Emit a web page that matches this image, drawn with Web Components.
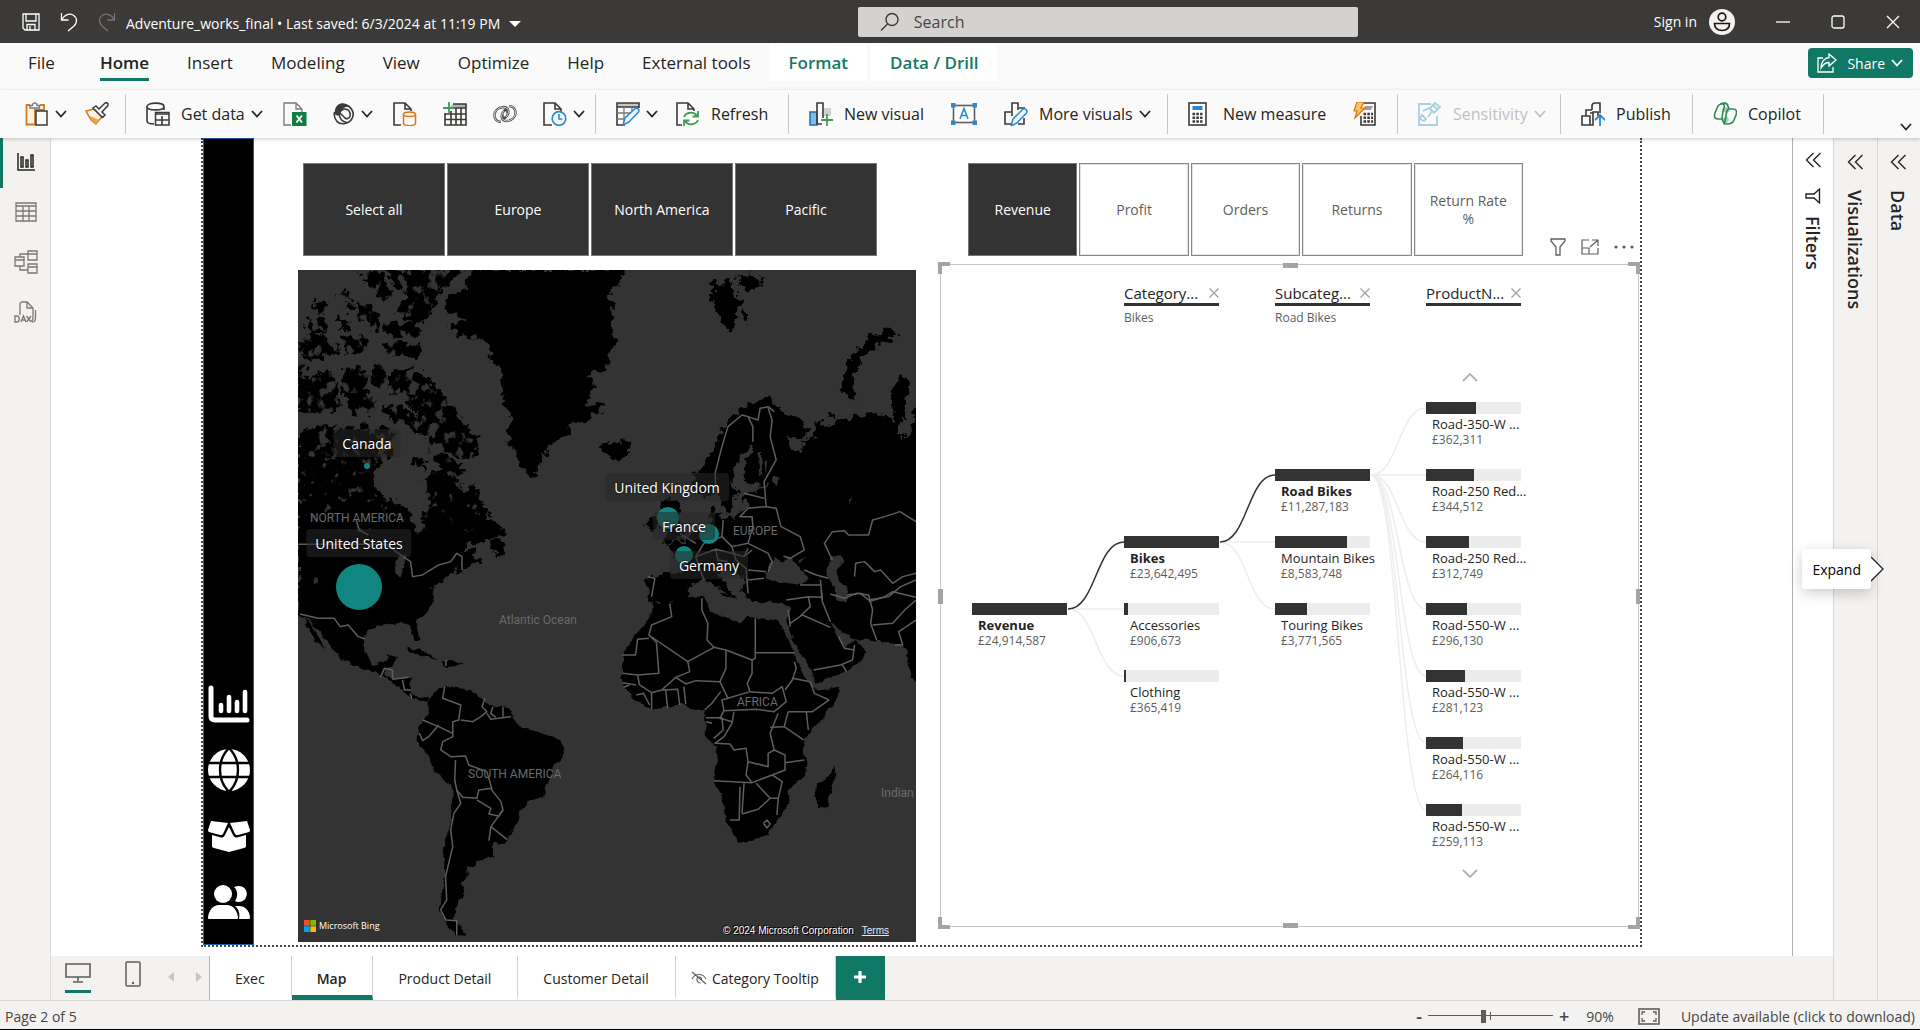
<!DOCTYPE html>
<html lang="en">
<head>
<meta charset="utf-8">
<title>Adventure_works_final</title>
<style>
html,body{margin:0;height:100%}
body{font-family:"Open Sans","Noto Sans",sans-serif;color:#252423;background:#fff;overflow:hidden}
pbi-app{height:100vh}
</style>
</head>
<body>
<pbi-app></pbi-app>
<script>
const RESET = `*{box-sizing:border-box}button{font:inherit;color:inherit;background:none;border:0;padding:0;margin:0;cursor:pointer}a{color:inherit;text-decoration:none}svg{display:block}`;
function define(name, css, html, init){
  customElements.define(name, class extends HTMLElement{
    constructor(){ super(); this.attachShadow({mode:"open"}); }
    connectedCallback(){
      if(this.ready) return; this.ready = true;
      const body = typeof html === "function" ? html(this) : html;
      this.shadowRoot.innerHTML = `<style>${RESET}${css}</style>${body}`;
      if(init) init(this, this.shadowRoot);
    }
  });
}

/* icon set: [viewBox width, viewBox height, markup] */
const D = 'fill="none" stroke="#3b3a39" stroke-width="1.6"';
const W = 'fill="none" stroke="#fff" stroke-width="1.3"';
const B = 'fill="none" stroke="#2b88d0" stroke-width="1.6"';
const G = 'fill="none" stroke="#3f9c57" stroke-width="1.8"';
const N = 'fill="none" stroke="#7a7876" stroke-width="1.3"';
const ICONS = {
  save:[18,18,`<path ${W} d="M1 1H17V17H3L1 15Z M4 1V8H14V1 M5 17V11.500H13V17 M8 13V17"/>`],
  undo:[18,20,`<path ${W} d="M1.500 1V8H8.500 M1.500 8C4 3 9 1 13 3C18 6 17 11 14 14L8 19"/>`],
  redo:[18,20,`<path fill="none" stroke="#777573" stroke-width="1.3" d="M16.500 1V8H9.500 M16.500 8C14 3 9 1 5 3C0 6 1 11 4 14L10 19"/>`],
  tri:[12,6,`<path fill="#fff" d="M0 0H12L6 6Z"/>`],
  search:[20,20,`<circle cx="12" cy="7.500" r="6" fill="none" stroke="#3b3a39" stroke-width="1.400"/><path d="M7.500 12L1 18.500" fill="none" stroke="#3b3a39" stroke-width="1.500"/>`],
  avatar:[26,26,`<circle cx="13" cy="13" r="13" fill="#f3f2f1"/><circle cx="13" cy="8" r="3.800" fill="none" stroke="#1b1a19" stroke-width="1.700"/><path d="M5.500 14.500H20.500C20.500 19 17.500 21.500 13 21.500S5.500 19 5.500 14.500Z" fill="none" stroke="#1b1a19" stroke-width="1.700"/>`],
  min:[14,14,`<path ${W} d="M0 7H14"/>`],
  max:[14,14,`<rect x="1" y="1" width="12" height="12" rx="2" ${W}/>`],
  close:[14,14,`<path ${W} d="M1 1L13 13M13 1L1 13"/>`],
  share:[20,20,`<path ${W} d="M6 5H1V19H16V14 M12 1L19 7L12 13V9.500C8 9.500 6 11.500 4 15C4 9 7.500 5 12 4.500Z"/>`],
  chev:[12,8,`<path fill="none" stroke="currentColor" stroke-width="1.800" d="M1 1L6 6.500L11 1"/>`],
  paste:[24,24,`<path fill="#fdf3e6" stroke="#d27a1d" stroke-width="1.800" d="M5 3H1.500V22.500H10V8H19V3H15"/><path fill="#fff" stroke="#7a7876" stroke-width="1.400" d="M5 6V3.500H7.500C7.500 0 12 0 12 3.500H14.500V6Z"/><rect x="11" y="9" width="11" height="14" fill="#fafafa" stroke="#3b3a39" stroke-width="1.500"/>`],
  brush:[24,24,`<path d="M1 9L9 7L17 15L14 18L11 22L6 18Z" fill="#fdf3e6" stroke="#d27a1d" stroke-width="1.500"/><path d="M5 14L14 18L11 22L6 18Z" fill="#f0a63c"/><path d="M8 6L11 4L14 7L20 1C22 0 24 2 22.500 4L17 10L20 13L17.500 15.500Z" fill="#fafafa" stroke="#3b3a39" stroke-width="1.500"/>`],
  getdata:[24,24,`<path ${D} d="M8 22C4 22 1 21 1 19V4 M18 8V4 M1 4.500C1 0 18 0 18 4.500S1 9 1 4.500"/><rect x="9.500" y="10.500" width="13.500" height="12.500" fill="#fafafa" stroke="#3b3a39" stroke-width="1.500"/><path ${D} d="M9 12H23 M9 18H23 M16 14V23" stroke-width="1.300"/>`],
  excel:[24,24,`<path ${N} d="M8 23H1V1H13L19 7V10 M13 1V7H19" stroke-width="1.600"/><rect x="9" y="10" width="14.500" height="14" fill="#107c41"/><path d="M13.500 13.500L19 20.500M19 13.500L13.500 20.500" stroke="#fff" stroke-width="1.800"/>`],
  lake:[22,24,`<path ${D} stroke-width="1.400" d="M1.500 10C0 18 6 23 12 21.500C19 20 22 13 19 8C17 4.500 13 2.500 9 3 M7 9C5 14 8 20 14 20.500 M8 9C11 5.500 16 7 17 11C18 15 15 18 12 16L7 11"/><path d="M2 8C3 3 8 0 13 2L17 5C13 4 9 6 8 10L5 14L1.500 12Z" fill="#3b3a39"/>`],
  sql:[24,24,`<path ${D} d="M8 23H1V1H12L18 7V9 M12 1V7H18"/><path d="M10.500 12V21C10.500 24.500 22.500 24.500 22.500 21V12" fill="#fafafa" stroke="#d27a1d" stroke-width="1.500"/><ellipse cx="16.500" cy="12.300" rx="6" ry="2.300" fill="#fcefdc" stroke="#d27a1d" stroke-width="1.500"/>`],
  table:[24,24,`<path d="M10 2H23V6H6Z" fill="#b3b0ad"/><path ${D} d="M10 2H23V23H2V11 M2 12H23 M2 17.500H23 M8 9V23 M13 6V23 M18 6V23 M9 6H23" stroke-width="1.300"/><path ${G} d="M6 0V12M0 6H12"/>`],
  verse:[24,24,`<g fill="none" stroke="#4a4846"><path stroke-width="2.400" d="M8 20C-1 20 -1 6 10 5C16 5 17 11 13 15C11 17 8 15 10 12 M16 4C25 4 25 18 14 19C8 19 7 13 11 9C13 7 16 9 14 12"/></g><path fill="none" stroke="#fafafa" stroke-width="0.800" d="M8 20C-1 20 -1 6 10 5C16 5 17 11 13 15 M16 4C25 4 25 18 14 19C8 19 7 13 11 9"/>`],
  recent:[24,24,`<path ${D} d="M9 23H1V1H12L18 7V9 M12 1V7H18"/><circle cx="16" cy="16.500" r="6.800" fill="#fafafa" stroke="#2b88d0" stroke-width="1.700"/><path ${B} d="M16 12V17H19.500"/>`],
  transform:[24,24,`<path d="M1 1H23V5H1Z" fill="#c8c6c4"/><path ${D} d="M9 23H1V1H23V6 M1 5H23" stroke-width="1.500"/><path ${N} d="M1 11H16M1 17H11M8 5V20M16 5V11"/><path d="M7 23L9 16L19 6.500C21 5.500 24 7.500 22.500 10L13 20Z" fill="#eaf4fb" stroke="#2b88d0" stroke-width="1.500"/>`],
  refresh:[24,24,`<path ${D} d="M6 23H1V1H12L18 7V9 M12 1V7H18"/><path ${G} d="M8 15C10 10 18 9 21 14 M22 9V14.500H16.500 M22 18C20 23 12 24 9 19 M8 24V18.500H13.500"/>`],
  visual:[24,24,`<path d="M15 6H22V14H15Z" fill="#d2d0ce"/><rect x="1" y="10" width="7" height="13" fill="#83b9e8" stroke="#1f6fb5" stroke-width="1.500"/><path ${D} d="M13 22H8V1H14V16"/><path ${G} d="M18 12V24M12 18H24"/>`],
  textbox:[26,22,`<rect x="2.500" y="2.500" width="21" height="17" fill="#fff" stroke="#605e5c" stroke-width="1.600"/><path fill="#2b88d0" d="M0 0H4.500V4.500H0ZM21.500 0H26V4.500H21.500ZM0 17.500H4.500V22H0ZM21.500 17.500H26V22H21.500Z"/><path ${B} d="M9 16L13 5.500L17 16M10.500 12.500H15.500" stroke-width="1.300"/>`],
  more:[24,24,`<path ${D} d="M7 22H1V10H7M8 14V1H14V8M20 16V22H14 M15 6H21" /><path d="M7 24L9 17L19 7C21 6 24 8 22.500 11L13 21Z" fill="#eaf4fb" stroke="#2b88d0" stroke-width="1.500"/>`],
  calc:[24,24,`<rect x="1" y="1" width="17" height="22" fill="#fff" stroke="#3b3a39" stroke-width="1.600"/><rect x="4.500" y="4" width="10" height="4" fill="#2b88d0"/><path stroke="#3b3a39" stroke-width="2.400" stroke-dasharray="2.600 1.200" d="M4.500 12H14.500M4.500 15.800H14.500M4.500 19.500H14.500"/>`],
  quick:[24,24,`<path ${D} d="M10 1H22V23H8V14"/><path d="M12 4H20L18 8H11Z" fill="#a19f9d"/><path stroke="#3b3a39" stroke-width="2.400" stroke-dasharray="2.600 1.200" d="M10.500 12H20M10.500 15.800H20M10.500 19.500H20"/><path d="M4 0H11L8 6H12L2 16L4 9H1Z" fill="#f8c36b" stroke="#d9730d" stroke-width="1.200"/>`],
  sens:[24,24,`<path fill="none" stroke="#a9cfe8" stroke-width="1.800" d="M13 2H1V23H19V14 M4 13L8 17L6 19L2 17Z M5 9L11 6L14 9L10 15 M12 6L17 1L22 5L16 11ZM15 3L20 8"/>`],
  publish:[24,24,`<path ${D} d="M5 12V8H11 M11 8V4C11 2 12 1 14 1H19V11 M1 14H9V23H1Z M9 11H12V23H9 M5 14V10 M12 17V10H17V14"/><path fill="none" stroke="#2b88d0" stroke-width="1.800" d="M19 24V13M14 18L19 13L24 18"/>`],
  copilot:[24,24,`<path d="M9 7L14 5L17 9L13 12Z M9 17L14 14L16 18L13 22Z" fill="#9bd0ae"/><path fill="none" stroke="#2f8a58" stroke-width="1.600" d="M7 2C10 1 14 0 15 4L16 7H20C24 7 24 10 23 13L21 18C20 21 18 22 14 22C11 22 10 20 9 17H5C1 17 1 14 2 11L4 6C5 3 6 2 9 2C13 2 11 6 10 9L9 17 M16 7C13.500 7 14 10 13 13L12 19C11 21 10 22 12 22"/>`],
  rchart:[18,18,`<path fill="none" stroke="#252423" stroke-width="1.500" d="M1 0V17H18 M4 4H6V14H4Z M9 7H11V14H9Z M14 2H16V14H14Z"/>`],
  rtable:[22,20,`<path ${N} d="M1 1H21V19H1Z M1 4H21 M1 9H21 M1 14H21 M8 4V19 M14 4V19"/>`],
  rmodel:[24,24,`<path ${N} d="M14 1H23V10H14Z M14 4H23 M1 7H10V16H1ZM1 10H10 M14 14H23V23H14ZM14 17H23 M6 7V4H14 M6 16V20H14"/>`],
  rdax:[24,22,`<path ${N} d="M6 14V3C6 2 7 1 8 1H13L19 7V16C19 19 18 20 17 20 M13 1V7H19 M21.500 9V17C21.500 20 20 21 18 21"/><path ${N} stroke-width="1.200" d="M1 15V21H3C6 21 6 15 3 15ZM7 21L9.500 15L12 21M8 19H11M12.500 15L17 21M17 15L12.500 21"/>`],
  nchart:[42,38,`<path fill="none" stroke="#fff" stroke-width="5" stroke-linecap="round" stroke-linejoin="round" d="M3 3V31C3 34 4 35 7 35H39"/><path stroke="#fff" stroke-width="4.600" stroke-linecap="round" d="M13 20V26M21 12V26M29 17V26M37 7V26"/>`],
  nglobe:[42,42,`<circle cx="21" cy="21" r="21" fill="#fff"/><path fill="none" stroke="#000" stroke-width="2.400" d="M0 14H42M0 28H42 M21 -1C9 11 9 31 21 43 M21 -1C33 11 33 31 21 43"/>`],
  nbox:[42,32,`<path fill="#fff" d="M3 1L20 3L15 14C14 15 13 15 12 15L1 12C0 11 0 11 0 10Z M39 1L22 3L27 14C28 15 29 15 30 15L41 12C42 11 42 11 42 10Z M4 15L13 17.500C15 17.500 16 17 17 15L21 7L25 15C26 17 27 17.500 29 17.500L38 15V26C38 27 37 28 36 28L21 32L6 28C5 28 4 27 4 26Z"/>`],
  nusers:[42,34,`<path fill="#fff" d="M30 1A8 8 0 1 1 27 16C30 12 30 5 26 2Z M31 34H41C42 34 42 33 42 32C41 25 37 21 31 21H27C31 24 32 29 31 34Z"/><circle cx="15" cy="9" r="9" fill="#fff"/><path fill="#fff" d="M11 20H19C25 20 29 25 30 32C30 33 30 34 29 34H1C0 34 0 33 0 32C1 25 5 20 11 20Z"/>`],
  funnel:[16,18,`<path fill="none" stroke="#605e5c" stroke-width="1.300" d="M1 1H15V3L10 9V17H6V9L1 3Z"/>`],
  sidefunnel:[16,16,`<path fill="none" stroke="#252423" stroke-width="1.400" d="M14.500 1V15L9 10H1V6H9Z"/>`],
  focus:[18,16,`<path fill="none" stroke="#605e5c" stroke-width="1.200" d="M8 1H1V15H17V9 M1 9H8V15 M9 8L17 1 M11 1H17V7"/>`],
  dots:[20,4,`<circle cx="2" cy="2" r="1.600" fill="#605e5c"/><circle cx="10" cy="2" r="1.600" fill="#605e5c"/><circle cx="18" cy="2" r="1.600" fill="#605e5c"/>`],
  x:[10,10,`<path fill="none" stroke="#a19f9d" stroke-width="1.300" d="M0.500 0.500L9.500 9.500M9.500 0.500L0.500 9.500"/>`],
  up:[16,9,`<path fill="none" stroke="#b3b0ad" stroke-width="1.800" d="M1 8L8 1L15 8"/>`],
  down:[16,9,`<path fill="none" stroke="#b3b0ad" stroke-width="1.800" d="M1 1L8 8L15 1"/>`],
  dbl:[16,16,`<path fill="none" stroke="#252423" stroke-width="1.400" d="M8.500 1L1.500 8L8.500 15M15.500 1L8.500 8L15.500 15"/>`],
  desktop:[26,20,`<path fill="none" stroke="#605e5c" stroke-width="1.600" d="M1 1H25V14H1Z M13 14V18M8 19H18"/>`],
  phone:[16,26,`<rect x="1" y="1" width="14" height="24" rx="1" fill="none" stroke="#605e5c" stroke-width="1.500"/><circle cx="8" cy="22" r="1.200" fill="#605e5c"/>`],
  left:[6,10,`<path fill="#c8c6c4" d="M6 0V10L0 5Z"/>`],
  right:[6,10,`<path fill="#c8c6c4" d="M0 0V10L6 5Z"/>`],
  hidden:[16,14,`<path fill="none" stroke="#605e5c" stroke-width="1.100" d="M1 8C4 2 12 2 15 8 M1 1L15 13 M9.500 12C5 12 5 6 8 6C10 6 11 8 10.500 9"/>`],
  plus:[12,12,`<path stroke="#fff" stroke-width="3.200" d="M6 0V12M0 6H12"/>`],
  fit:[22,17,`<rect x="1" y="1" width="20" height="15" fill="none" stroke="#605e5c" stroke-width="1.600"/><path fill="none" stroke="#605e5c" stroke-width="1.300" d="M7 4H4V7M15 4H18V7M7 13H4V10M15 13H18V10"/>`],
  bing:[12,12,`<path fill="#f25022" d="M0 0H5.700V5.700H0Z"/><path fill="#7fba00" d="M6.300 0H12V5.700H6.300Z"/><path fill="#00a4ef" d="M0 6.300H5.700V12H0Z"/><path fill="#ffb900" d="M6.300 6.300H12V12H6.300Z"/>`]
};
define("pbi-icon", `:host{display:block;flex:none}`, el => {
  const [w,h,m] = ICONS[el.getAttribute("name")];
  return `<svg width="${w}" height="${h}" viewBox="0 0 ${w} ${h}" aria-hidden="true">${m}</svg>`;
});
const icon = n => `<pbi-icon name="${n}"></pbi-icon>`;

define("pbi-title-bar", `
:host{display:grid;grid-template-columns:837fr 500px 543fr;align-items:center;height:43px;padding:0 20px 0 22px;background:#3b3a38;color:#fff;font-size:14px}
.left,.right{display:flex;align-items:center}
.left{gap:20px}.doc{display:flex;align-items:center;gap:9px;margin-left:-10px;padding-top:4px;white-space:nowrap}
.search{display:flex;align-items:center;gap:14px;height:30px;padding:0 22px;background:#d3d2d0;border-radius:2px}
input{flex:1;border:0;background:none;outline:0;font:16px "Open Sans",sans-serif;color:#3b3a39;padding:0}
input::placeholder{color:#484644;opacity:1}
.right{justify-content:flex-end;gap:41px}.who{display:flex;align-items:center;gap:12px}`,
`<div class="left"><button aria-label="Save">${icon("save")}</button><button aria-label="Undo">${icon("undo")}</button><button aria-label="Redo">${icon("redo")}</button>
<button class="doc"><span>Adventure_works_final • Last saved: 6/3/2024 at 11:19 PM</span>${icon("tri")}</button></div>
<label class="search">${icon("search")}<input type="text" placeholder="Search" aria-label="Search"></label>
<div class="right"><button class="who"><span>Sign in</span>${icon("avatar")}</button><button aria-label="Minimize">${icon("min")}</button><button aria-label="Maximize">${icon("max")}</button><button aria-label="Close">${icon("close")}</button></div>`);

define("pbi-menu-tabs", `
:host{display:flex;align-items:flex-start;height:47px;background:#fafafa;padding:0 7px 0 9px;font-size:17px}
nav{display:flex;flex:1}
a{display:block;height:38px;line-height:40px;padding:0 19px;white-space:nowrap}
a.file{margin-right:7px}
a.on{font-weight:600}a.on::after{content:"";display:block;height:3px;margin-top:-5px;background:#117865}
a.ctx{background:#fff;color:#117865;font-weight:600;margin-right:4px}
.share{display:flex;align-items:center;gap:10px;height:30px;margin-top:5px;padding:0 10px 0 9px;border-radius:4px;background:#117865;color:#fff;font-size:14px}
.share span{margin-right:-4px}`,
`<nav><a href="#" class="file">File</a><a href="#" class="on">Home</a><a href="#">Insert</a><a href="#">Modeling</a><a href="#">View</a><a href="#">Optimize</a><a href="#">Help</a><a href="#">External tools</a><a href="#" class="ctx">Format</a><a href="#" class="ctx">Data / Drill</a></nav>
<button class="share">${icon("share")}<span>Share</span>${icon("chev")}</button>`);

define("pbi-ribbon-item", `
:host{display:block}
:host(:not([menu])){margin-right:6px}
button{display:flex;align-items:center;height:40px;white-space:nowrap}
.text{padding-left:11px}
.chev{padding-left:6px}
:host([disabled]) button{color:#c2c0be}`,
el => `<button ${el.hasAttribute("disabled")?"disabled":""} aria-label="${el.getAttribute("label")}">${icon(el.getAttribute("icon"))}${el.textContent?`<span class="text"><slot></slot></span>`:""}${el.hasAttribute("menu")?`<span class="chev">${icon("chev")}</span>`:""}</button>`);

define("pbi-ribbon", `
:host{display:flex;align-items:center;height:48px;padding-left:25px;background:#fafafa;font-size:16px;box-shadow:0 1px 4px rgba(0,0,0,.22);position:relative;z-index:2}
.g{display:flex;align-items:center;gap:var(--gap,20px);height:40px;width:var(--w);border-right:1px solid #c8c6c4;margin-right:20px}
.collapse{margin:26px 8px 0 auto}`,
() => {
  const groups = [
    [101,18,[["paste","Paste","",1],["brush","Format painter"]]],
    [450,20,[["getdata","Get data","Get data",1],["excel","Excel workbook"],["lake","Data hub","",1],["sql","SQL Server"],["table","Enter data"],["verse","Dataverse"],["recent","Recent sources","",1]]],
    [173,18,[["transform","Transform data","",1],["refresh","Refresh","Refresh"]]],
    [359,21,[["visual","New visual","New visual"],["textbox","Text box"],["more","More visuals","More visuals",1]]],
    [210,21,[["calc","New measure","New measure"],["quick","Quick measure"]]],
    [143,0,[["sens","Sensitivity","Sensitivity",1,1]]],
    [112,0,[["publish","Publish","Publish"]]],
    [111,0,[["copilot","Copilot","Copilot"]]]];
  return groups.map(([w,gap,items]) => `<div class="g" style="--w:${w}px;--gap:${gap}px">${items.map(([ic,label,text,menu,dis]) =>
    `<pbi-ribbon-item icon="${ic}" label="${label}"${menu?" menu":""}${dis?" disabled":""}>${text||""}</pbi-ribbon-item>`).join("")}</div>`).join("")
    + `<button class="collapse" aria-label="Collapse ribbon">${icon("chev")}</button>`;
});

define("pbi-view-rail", `
:host{display:flex;flex-direction:column;background:#f3f2f1;border-right:1px solid #dddbd9}
button{display:flex;align-items:center;justify-content:center;height:50px;border-left:3px solid transparent;padding:0 2px 2px 0}
.on{border-color:#117865}`,
`<button class="on" aria-label="Report view">${icon("rchart")}</button><button aria-label="Table view">${icon("rtable")}</button><button aria-label="Model view">${icon("rmodel")}</button><button aria-label="DAX query view">${icon("rdax")}</button>`);

define("pbi-slicer", `
:host{display:flex;gap:2px;height:93px;font-size:14px;line-height:18px}
button{flex:1 1 0;min-width:0;border:1px solid #8a8886;outline:1px solid #e4e2e0;outline-offset:-2px;background:#fff;color:#605e5c;padding:0 12px}
button.on{background:#333;color:#fff;outline:0;border-color:#777}`,
el => el.getAttribute("options").split(",").map((o,i) => `<button class="${el.hasAttribute("all")||i===0?"on":""}">${o}</button>`).join(""));

/* bubble map: land outlines are kept in two coordinate frames, north and south */
const NORTH_LAND = [
"20,515 60,500 110,500 140,490 165,505 190,490 205,520 230,500 262,520 240,560 262,580 240,600 220,610 207,640 210,680 235,715 280,735 300,755 307,790 320,820 333,810 328,770 350,740 345,700 335,660 345,640 375,640 380,620 400,640 430,690 445,690 455,665 475,720 500,770 515,790 540,815 510,822 495,845 455,850 430,870 460,870 455,885 480,900 470,907 430,930 410,935 380,960 355,980 352,1030 20,1030",
"500,850 515,822 525,850 540,870 535,885 505,880",
"265,330 300,325 340,345 370,400 400,430 420,470 450,510 468,530 465,580 440,600 400,580 380,560 350,540 340,500 310,460 290,430 300,400 270,390 250,410 245,350",
"340,560 390,580 440,640 410,650 370,610 345,590","300,585 345,600 340,625 300,610",
"130,330 170,320 200,350 185,380 195,400 215,440 190,470 150,460 130,390","20,350 50,350 100,330 120,380 125,430 110,450 60,455 20,450","205,315 240,320 235,380 210,395","230,440 280,440 340,490 345,530 315,520 300,510 260,490",
"240,30 430,30 410,50 380,90 360,130 340,180 310,190 280,170 265,150 290,110 260,80 250,60","165,35 230,35 240,70 260,110 230,120 200,80","235,190 330,190 325,230 260,235 230,220","225,250 325,255 320,295 250,290",
"60,125 90,130 80,160 50,150","120,95 150,100 160,150 130,150","165,125 195,135 200,180 170,180","40,180 80,170 90,210 50,230","120,165 150,180 150,210 125,210","25,240 60,220 100,240 120,280 60,298 25,280","130,230 190,230 190,275 140,285","200,150 220,160 215,220 200,215","20,310 45,335 20,350",
"450,30 835,30 815,80 795,100 805,150 798,200 812,240 795,290 790,330 740,345 760,370 735,430 785,435 770,455 730,485 700,490 690,520 640,560 625,600 612,652 590,645 570,620 560,580 540,520 550,470 530,430 525,330 500,290 495,250 470,232 420,232 400,190 440,180 385,150 390,110 435,90 440,60",
"785,570 765,550 800,550 820,540 850,550 848,575 825,600 795,595","1050,60 1075,80 1095,50 1110,110 1130,120 1110,170 1095,215 1075,180 1050,130","1108,50 1140,40 1175,60 1160,92 1125,85","1125,150 1145,155 1140,185 1128,180",
"1500,203 1507,225 1470,250 1430,290 1410,330 1400,370 1415,418 1390,415 1370,380 1385,330 1400,280 1440,235",
"1005,690 1005,645 1040,590 1060,560 1070,520 1090,480 1120,450 1160,425 1190,412 1215,440 1230,455 1270,485 1290,510 1280,540 1230,530 1250,570 1275,570 1290,535 1310,535 1308,480 1335,505 1345,490 1380,480 1400,475 1445,455 1470,465 1500,480 1498,420 1505,365 1525,345 1540,370 1530,430 1528,480 1510,525 1530,535 1545,510 1558,440 1590,440 1590,1030 1150,1030 1120,980 1140,960 1100,930 1060,935 1090,985 1115,1010 1100,1020 1060,975 1030,960 1000,965 985,1030 895,1030 888,950 975,940 985,905 950,880 940,855 985,840 1010,812 1045,795 1045,745 1062,725 1062,765 1085,775 1120,765 1135,745 1128,705 1160,690 1200,675 1140,672 1128,640 1140,600 1155,560 1145,548 1125,590 1105,620 1098,670 1115,700 1100,735 1095,762 1080,755 1068,690 1035,715",
"925,728 948,700 965,740 975,790 992,825 960,845 922,848 945,820 925,800 945,780 925,760","885,795 903,768 918,788 905,815 885,812","1345,455 1357,460 1352,475 1342,468"];
const NORTH_WATER = ["1183,955 1190,920 1205,892 1225,905 1245,890 1255,910 1295,955 1270,975 1200,962","1335,945 1345,890 1372,882 1380,905 1360,930 1365,955 1390,990 1385,1025 1360,1018 1352,975","345,495 368,490 365,515 345,512","262,905 275,880 290,890 275,950 262,940","1200,650 1220,655 1212,672 1200,668","1390,715 1402,712 1390,735","60,955 66,950 68,970 62,972","1165,580 1172,575 1175,640 1168,650","1180,600 1188,600 1184,640","1265,900 1285,893 1268,910"];
const NORTH_BORDER = ["1060,690 1058,640 1075,560 1090,500 1125,465 1140,470 1165,480 1170,445 1190,440 1205,455","1140,470 1152,500 1152,545","1190,445 1200,480 1195,530 1210,600 1180,665 1185,740 1210,745 1222,800 1270,830 1280,870 1245,895 1228,888","1185,740 1140,745 1120,770 1150,770 1152,800 1140,850 1100,860 1075,830 1078,780","1130,700 1180,715","1075,830 1030,850 1010,890 1030,960","1010,850 970,820","1140,850 1190,880 1200,905 1190,935","1010,890 1060,868 1100,880 1130,890 1140,865","1100,860 1110,900 1135,925 1140,1000","1130,890 1150,870","1140,930 1185,935","1140,960 1180,955","1060,870 1065,900 1090,905","1350,900 1330,850 1350,815 1380,812 1390,825 1440,825 1450,780 1480,770 1518,755 1558,785","1405,950 1408,910 1430,905 1455,935 1470,930 1500,970 1525,950 1558,940","1280,930 1310,945 1340,955","1320,960 1325,1020","1385,1005 1420,1000 1440,1020 1490,1010 1520,980 1558,960","890,950 908,955 900,1010","20,853 240,853 270,880 300,905 305,950 330,945 370,915 400,905 415,880 428,890 428,930","165,780 172,810 195,825","1270,975 1320,975"];
const SOUTH_LAND = [
"20,-5 357,-5 355,40 330,80 313,92 322,150 310,150 298,105 275,98 240,105 200,115 183,140 185,185 205,225 235,215 245,195 267,200 258,228 235,238 240,262 280,270 300,262 298,305 320,325 345,320 345,335 310,330 280,300 245,270 220,250 180,238 125,205 100,170 70,120 45,85 20,75",
"35,80 55,105 88,178 70,160 45,115","290,178 320,178 372,208 340,200 300,185","372,215 400,210 432,225 385,228",
"345,330 370,295 395,290 450,300 470,320 500,345 545,355 555,385 570,410 600,420 640,432 672,452 683,475 675,505 655,530 645,570 630,620 600,630 573,660 570,690 550,730 535,762 505,758 505,800 465,810 460,835 440,832 443,860 428,880 435,915 415,945 410,990 440,1037 410,1035 385,990 370,960 387,850 380,780 400,700 405,590 360,545 340,490 315,450 320,410 345,370",
"905,28 915,40 945,38 1000,20 1035,20 1045,65 1090,85 1120,97 1140,80 1215,92 1235,130 1260,210 1280,260 1300,290 1315,302 1367,290 1363,320 1330,380 1290,430 1275,470 1285,515 1282,558 1238,600 1242,640 1220,680 1185,735 1160,750 1115,758 1105,730 1085,690 1075,620 1055,570 1065,510 1060,470 1035,440 1035,400 1030,360 1000,358 975,342 900,360 860,330 830,290 825,260 830,190 850,150 880,110 905,60",
"1355,528 1358,560 1335,652 1315,655 1308,620 1312,580 1340,560",
"1185,-5 1590,-5 1590,300 1558,280 1545,260 1533,175 1520,165 1450,150 1400,148 1370,120 1345,98 1362,140 1380,170 1408,150 1435,185 1420,215 1380,245 1308,282 1298,240 1260,170 1240,115 1235,90 1250,48 1190,32","890,-5 990,-5 975,15 905,28","1120,-5 1165,-5 1160,30 1140,25","1070,12 1100,10 1095,25"];
const SOUTH_BORDER = ["25,72 70,85 110,85 125,110 145,105 170,140 187,147","225,262 235,235 255,240 255,268","255,268 295,262","280,270 285,300 300,300","300,310 303,328","388,210 388,228",
"385,290 380,325 425,345 420,390 405,395 405,440 380,455 375,480 400,500 437,498 445,525 490,545 502,595 470,600 465,625 430,622 415,600 410,570 412,510","415,600 425,640 408,670 400,720 405,770 387,860 390,930 375,960 388,990 415,992 415,1035","330,390 370,410 405,430","370,405 345,440 330,452 322,430","425,390 455,395 475,380 490,365 478,350 485,325","490,370 500,388 550,380","505,350 500,370 512,382","530,350 530,380","500,597 525,635 530,660 520,678 495,672 500,655 465,630","530,660 500,710 540,748","500,710 495,752",
"945,40 950,80 900,105 893,135 990,215 1055,172","1025,25 1025,60 1040,100 1038,150 1055,172 1085,180 1150,210 1158,205 1158,85","1160,188 1255,188","893,145 865,148 860,195 826,195","893,135 912,157 918,250 865,255","990,215 995,245 960,262 925,300 900,308 900,360","960,262 985,282 1010,272 1070,275 1085,235 1085,180","1150,210 1150,250 1138,280 1145,305 1090,325 1070,275","1072,305 1050,340 1032,360","1145,305 1200,310 1225,290 1235,335 1205,365 1160,358 1080,362 1075,330 1090,325","1255,215 1260,235 1250,270 1232,300","1250,265 1295,275 1305,310 1342,330","1342,330 1300,365 1240,365","1285,365 1290,420","1240,365 1230,410 1278,450","1195,412 1230,410","1105,365 1100,400 1080,440 1058,460 1095,462 1105,480 1135,475 1140,515 1190,530 1190,490 1205,480 1195,430 1215,370","1140,515 1135,555 1150,578 1200,555 1232,540 1232,495 1205,480","1232,518 1280,510","1055,572 1150,578","1130,580 1125,670","1120,590 1118,690 1095,690","1160,580 1195,625 1165,658 1125,672","1195,625 1215,625 1225,575 1200,555","1215,625 1212,675","1178,700 1187,690 1195,702 1187,714 1178,700","1035,383 1075,383 1078,420 1055,445","1080,362 1070,385 1100,395","1050,400 1035,395","935,300 940,355","925,300 965,298 970,345","980,290 985,342","865,255 870,285 900,308","828,250 865,255","828,278 862,285","830,292 845,285","862,315 880,310 895,345",
"1245,100 1275,75 1345,112","1270,78 1295,50 1290,20","1235,30 1290,20 1322,22","1322,0 1325,35 1345,95","1303,240 1370,225 1400,210 1405,165","1375,225 1385,245","1345,12 1380,25 1410,10 1440,15 1450,60 1445,100 1460,150","1450,105 1500,100 1530,60 1558,30","1505,165 1525,165 1515,125 1558,90","1440,35 1480,20 1500,5 1558,22","1365,140 1380,175 1405,180","1240,60 1245,110"];
const polys = (list,extra) => list.map(p => `<polygon points="${p}"${extra||""}/>`).join("");
const lines = list => list.map(p => `<polyline points="${p}" vector-effect="non-scaling-stroke"/>`).join("");

define("pbi-map", `
:host{display:block;position:relative;overflow:hidden;background:#333;flex:1;min-height:0;font-size:14px}
.land{width:618px;height:672px}
.geo text{font:12px Roboto,sans-serif;fill:#6a6a6a}
.pin{position:absolute;display:flex;align-items:center;justify-content:center;height:28px;padding:0 9px;border-radius:4px;background:rgba(40,40,40,.55);color:#fff;white-space:nowrap;transform:translateX(-50%);text-shadow:0 0 2px #000}
footer{position:absolute;inset:auto 27px 5px 6px;display:flex;align-items:flex-end;gap:8px;color:#fff;line-height:12px}
.brand{display:flex;align-items:center;gap:3px;margin-right:auto;font-size:9px;padding-bottom:5px}
.copy{text-shadow:1px 1px 0 #000,-1px -1px 0 #000;font:10px/12px "Liberation Sans",sans-serif}
a{font:10px/12px "Liberation Sans",sans-serif;text-decoration:underline;color:#dfe6ff}`,
() => `<svg class="land" viewBox="0 0 618 672" role="img" aria-label="Revenue by country">
<defs><filter id="rough" x="-5%" y="-5%" width="110%" height="110%" color-interpolation-filters="sRGB"><feTurbulence type="fractalNoise" baseFrequency="0.130" numOctaves="3" seed="4"/><feDisplacementMap in="SourceGraphic" scale="14" xChannelSelector="R" yChannelSelector="G"/></filter>
<filter id="soft" x="-5%" y="-5%" width="110%" height="110%" color-interpolation-filters="sRGB"><feTurbulence type="fractalNoise" baseFrequency="0.150" numOctaves="2" seed="9"/><feDisplacementMap in="SourceGraphic" scale="5" xChannelSelector="R" yChannelSelector="G"/></filter>
<filter id="lakes" x="0" y="0" width="100%" height="100%" color-interpolation-filters="sRGB"><feTurbulence type="fractalNoise" baseFrequency="0.100 0.080" numOctaves="4" seed="12"/><feColorMatrix values="0 0 0 0 .2  0 0 0 0 .2  0 0 0 0 .2  9 0 0 0 -5"/></filter>
<filter id="ponds" x="0" y="0" width="100%" height="100%" color-interpolation-filters="sRGB"><feTurbulence type="fractalNoise" baseFrequency="0.120" numOctaves="3" seed="21"/><feColorMatrix values="0 0 0 0 .2  0 0 0 0 .2  0 0 0 0 .2  8 0 0 0 -5.100"/></filter>
<clipPath id="arctic"><path d="M0 0H150L130 60L150 100L175 170L165 190L130 195H80L0 185Z"/></clipPath>
<clipPath id="shield"><path d="M0 185L165 190L195 250L170 262L140 245L60 262L0 245Z"/></clipPath></defs>
<g filter="url(#rough)"><g transform="translate(-8 -10) scale(.4018 .3333)">${polys(NORTH_LAND)}</g></g>
<g clip-path="url(#arctic)"><rect width="220" height="260" filter="url(#lakes)"/></g>
<g clip-path="url(#shield)"><rect width="220" height="290" filter="url(#ponds)"/></g>
<g filter="url(#soft)"><g transform="translate(-8 320) scale(.4018 .3333)">${polys(SOUTH_LAND)}</g>
<g transform="translate(-8 -10) scale(.4018 .3333)">${polys(NORTH_WATER,' fill="#333"')}</g></g>
<g fill="none" stroke="#5e5e5e" stroke-width="1.500" stroke-linejoin="round"><g transform="translate(-8 -10) scale(.4018 .3333)">${lines(NORTH_BORDER)}</g><g transform="translate(-8 320) scale(.4018 .3333)">${lines(SOUTH_BORDER)}</g></g>
<g class="geo"><text x="12" y="252">NORTH AMERICA</text><text x="435" y="265">EUROPE</text><text x="201" y="354">Atlantic Ocean</text><text x="439" y="436">AFRICA</text><text x="170" y="508">SOUTH AMERICA</text><text x="583" y="527">Indian</text></g>
<g fill="#12908a" fill-opacity=".93"><circle cx="61" cy="317" r="23"/><circle cx="69" cy="196" r="3"/><circle cx="370" cy="248" r="11"/><circle cx="411" cy="264" r="10"/><circle cx="386" cy="285" r="9"/></g></svg>
<span class="pin" style="left:69px;top:159px">Canada</span><span class="pin" style="left:61px;top:259px">United States</span><span class="pin" style="left:369px;top:203px">United Kingdom</span><span class="pin" style="left:386px;top:242px">France</span><span class="pin" style="left:411px;top:281px">Germany</span>
<footer><span class="brand">${icon("bing")}<span>Microsoft Bing</span></span><span class="copy">© 2024 Microsoft Corporation</span><a href="#">Terms</a></footer>`);

define("pbi-tree-node", `
:host{display:block;position:absolute;left:var(--x);top:var(--y);width:95px}
.bar{height:12px;background:#ececec}.bar i{display:block;height:12px;width:var(--fill);background:#333}
.name,.value{padding-left:6px;white-space:nowrap}
.name{font-size:13px;line-height:17px;margin-top:2px;color:#252423}
.value{font-size:12px;line-height:14px;color:#605e5c}
:host([picked]) .name{font-weight:700}`,
`<div class="bar"><i></i></div><div class="name"><slot></slot></div><div class="value"><slot name="value"></slot></div>`);

define("pbi-decomposition-tree", `
:host{display:block;position:relative;flex:1;min-height:0;border:1px solid #c8c6c4;margin-right:1px;margin-left:1px}
.heads{display:flex;gap:56px;padding:17px 0 0 183px}
.head{width:95px}
.field{display:flex;align-items:center;justify-content:space-between;height:24px;border-bottom:3px solid #333;font-size:15px;line-height:20px}
.pick{font-size:12px;line-height:24px;color:#605e5c}
.wires{position:absolute;left:0;top:0}
.arrow{position:absolute;left:521px}
.h{position:absolute;background:#a6a4a2}
.t{left:50%;top:-2px;width:15px;height:5px;margin-left:-7px}.b{left:50%;bottom:-2px;width:15px;height:5px;margin-left:-7px}
.l{left:-3px;top:50%;width:5px;height:15px;margin-top:-7px}.r{right:-2px;top:50%;width:4px;height:15px;margin-top:-7px}
.c{position:absolute;width:12px;height:12px;border:0 solid #a6a4a2}
.tl{left:-3px;top:-3px;border-width:4px 0 0 4px}.tr{right:-2px;top:-3px;border-width:4px 4px 0 0}.bl{left:-3px;bottom:-3px;border-width:0 0 4px 4px}.br{right:-2px;bottom:-3px;border-width:0 4px 4px 0}`,
() => {
  const X = [31,183,334,485], Y = r => 137 + 67*r;
  const nodes = [[0,3,95,"Revenue","£24,914,587",1],[1,2,95,"Bikes","£23,642,495",1],[1,3,4,"Accessories","£906,673"],[1,4,2,"Clothing","£365,419"],
    [2,1,95,"Road Bikes","£11,287,183",1],[2,2,72,"Mountain Bikes","£8,583,748"],[2,3,32,"Touring Bikes","£3,771,565"],
    [3,0,50,"Road-350-W ...","£362,311"],[3,1,48,"Road-250 Red...","£344,512"],[3,2,43,"Road-250 Red...","£312,749"],[3,3,41,"Road-550-W ...","£296,130"],[3,4,39,"Road-550-W ...","£281,123"],[3,5,37,"Road-550-W ...","£264,116"],[3,6,36,"Road-550-W ...","£259,113"]];
  const parent = {1:[0,3],2:[1,2],3:[2,1]};
  const wire = n => { const p = parent[n[0]], x1 = X[p[0]]+96, y1 = Y(p[1])+6, x2 = X[n[0]], y2 = Y(n[1])+6, m = (x1+x2)/2;
    return `<path fill="none" stroke="${n[5]?"#333":"#ededed"}" stroke-width="1.500" d="M${x1} ${y1}C${m} ${y1} ${m} ${y2} ${x2} ${y2}"/>`; };
  const sorted = nodes.filter(n => n[0]).sort((a,b) => (a[5]||0)-(b[5]||0));
  const head = (f,p) => `<div class="head"><div class="field"><span>${f}</span><button aria-label="Remove level">${icon("x")}</button></div><div class="pick">${p}</div></div>`;
  return `<div class="heads">${head("Category...","Bikes")}${head("Subcateg...","Road Bikes")}${head("ProductN...","")}</div>
  <svg class="wires" width="600" height="640">${sorted.map(wire).join("")}</svg>
  ${nodes.map(n => `<pbi-tree-node ${n[5]?"picked":""} style="--x:${X[n[0]]}px;--y:${Y(n[1])}px;--fill:${n[2]}px">${n[3]}<span slot="value">${n[4]}</span></pbi-tree-node>`).join("")}
  <button class="arrow" style="top:108px" aria-label="Previous">${icon("up")}</button><button class="arrow" style="top:604px" aria-label="Next">${icon("down")}</button>
  <i class="h t"></i><i class="h b"></i><i class="h l"></i><i class="h r"></i><i class="c tl"></i><i class="c tr"></i><i class="c bl"></i><i class="c br"></i>`;
});

define("pbi-report-page", `
:host{display:flex;margin:0 150px 9px;border:2px dotted #4a4846;border-top:0;min-width:0}
nav{display:flex;flex-direction:column;justify-content:flex-end;align-items:center;width:51px;background:#000;border:1px solid #1f5fae;padding-bottom:9px}
nav a{display:flex;align-items:center;justify-content:center;height:66px}
.content{flex:1;display:flex;gap:23px;padding:25px 0 0 44px;min-width:0}
.col{display:flex;flex-direction:column;min-width:0}
.left{flex:618 1 0;padding-bottom:3px}.rightc{flex:701 1 0;padding-bottom:18px}
.left pbi-slicer{margin:0 39px 14px 5px}
.row{display:flex;align-items:flex-end;padding:0 6px 0 29px;margin-bottom:8px}
.row pbi-slicer{flex:0 1 555px}
.tools{display:flex;align-items:center;gap:15px;margin-left:auto}`,
`<nav><a href="#" aria-label="Exec">${icon("nchart")}</a><a href="#" aria-label="Map">${icon("nglobe")}</a><a href="#" aria-label="Products">${icon("nbox")}</a><a href="#" aria-label="Customers">${icon("nusers")}</a></nav>
<div class="content"><div class="col left"><pbi-slicer all options="Select all,Europe,North America,Pacific"></pbi-slicer><pbi-map></pbi-map></div>
<div class="col rightc"><div class="row"><pbi-slicer options="Revenue,Profit,Orders,Returns,Return Rate %"></pbi-slicer><div class="tools"><button aria-label="Filters">${icon("funnel")}</button><button aria-label="Focus mode">${icon("focus")}</button><button aria-label="More options">${icon("dots")}</button></div></div>
<pbi-decomposition-tree></pbi-decomposition-tree></div></div>`);

define("pbi-side-pane", `
:host{display:flex;flex-direction:column;align-items:center;gap:20px;padding:16px 2px 0 0;border-left:1px solid #d9d7d5;background:#f3f2f1;font-size:18px;font-weight:600;line-height:24px}
:host([light]){background:#fff;border-color:#b3b0ad;padding:14px 0 0}
.title{writing-mode:vertical-rl;display:flex;align-items:center;gap:12px;white-space:nowrap}`,
`<button aria-label="Expand">${icon("dbl")}</button><div class="title"><slot name="icon"></slot><slot></slot></div>`);

define("pbi-page-tabs", `
:host{display:flex;background:#f3f2f1;font-size:14px}
.dev{display:flex;align-items:center;width:159px;padding:0 0 0 14px;border-right:1px solid #b3b0ad}
.dev button{display:flex;flex-direction:column;align-items:center}
.d{width:30px;height:30px;justify-content:space-between;border-bottom:3px solid #117865;margin-right:34px}
.p{margin:-8px 27px 0 0}.a{margin:0 22px 2px 0}
nav{display:flex}nav a{display:flex;align-items:center;gap:5px;padding:5px 26px 0 25px;background:#fff;border-right:1px solid #d2d0ce;border-bottom:5px solid #fff;height:44px;white-space:nowrap}
nav a.on{font-weight:600;border-bottom-color:#117865}
nav a.hid{padding:5px 16px 0 15px}
.add{display:flex;align-items:center;justify-content:center;width:49px;padding-bottom:3px;background:#117865}`,
`<div class="dev"><button class="d" aria-label="Desktop layout">${icon("desktop")}</button><button class="p" aria-label="Mobile layout">${icon("phone")}</button><button class="a" aria-label="Previous page">${icon("left")}</button><button class="a" aria-label="Next page">${icon("right")}</button></div>
<nav><a href="#">Exec</a><a href="#" class="on">Map</a><a href="#">Product Detail</a><a href="#">Customer Detail</a><a href="#" class="hid">${icon("hidden")}<span>Category Tooltip</span></a></nav><button class="add" aria-label="New page">${icon("plus")}</button>`);

define("pbi-status-bar", `
:host{display:flex;align-items:center;height:30px;padding:2px 5px 0;background:#f3f2f1;border-top:1px solid #d9d7d5;border-bottom:1px solid #000;color:#484644;font-size:14px}
.zoom{display:flex;align-items:center;margin-left:auto;gap:6px}
.zoom button{font-size:18px;line-height:20px;font-weight:600}
input{appearance:none;width:125px;height:14px;margin:0;background:linear-gradient(#605e5c,#605e5c) 0 6px/100% 1px no-repeat,linear-gradient(#605e5c,#605e5c) 62px 3px/1px 8px no-repeat}
input::-webkit-slider-thumb{appearance:none;width:5px;height:13px;background:#605e5c;border:0}
.pct{margin:0 24px 0 17px}.fit{margin-right:21px}`,
`<span>Page 2 of 5</span><div class="zoom"><button aria-label="Zoom out">-</button><input type="range" aria-label="Zoom" min="0" max="100" value="44"><button aria-label="Zoom in">+</button></div><span class="pct">90%</span><button class="fit" aria-label="Fit to page">${icon("fit")}</button><button>Update available (click to download)</button>`);

define("pbi-tooltip", `
:host{position:absolute;z-index:5;right:49px;top:549px;display:flex;align-items:center;height:40px;padding:0 10px;background:#fff;border-radius:3px;box-shadow:0 4px 14px rgba(0,0,0,.2);font-size:14px;color:#000}
svg{position:absolute;left:100%;top:7px}`,
`<slot></slot><svg width="13" height="26"><path d="M0 1L12 13L0 25" fill="#fff" stroke="#252423" stroke-width="1.300"/></svg>`);

define("pbi-app", `
:host{display:flex;flex-direction:column;position:relative}
main{flex:1;min-height:0;display:grid;grid-template-columns:51px minmax(0,1fr) 41px 44px 43px;grid-template-rows:minmax(0,1fr) 44px}
pbi-view-rail,.tall{grid-row:1/3}
pbi-page-tabs{grid-area:2/2/3/4}`,
`<pbi-title-bar></pbi-title-bar><pbi-menu-tabs></pbi-menu-tabs><pbi-ribbon></pbi-ribbon>
<main><pbi-view-rail></pbi-view-rail><pbi-report-page></pbi-report-page><pbi-side-pane light><pbi-icon slot="icon" name="sidefunnel"></pbi-icon>Filters</pbi-side-pane><pbi-side-pane class="tall">Visualizations</pbi-side-pane><pbi-side-pane class="tall">Data</pbi-side-pane><pbi-page-tabs></pbi-page-tabs></main>
<pbi-status-bar></pbi-status-bar><pbi-tooltip>Expand</pbi-tooltip>`);
</script>
</body>
</html>
